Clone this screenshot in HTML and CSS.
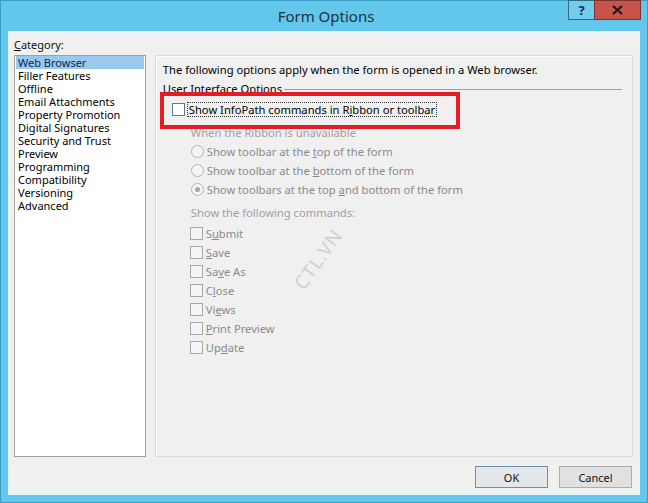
FILE: index.html
```html
<!DOCTYPE html>
<html lang="en">
<head>
  <meta charset="UTF-8" />
  <title>Form Options</title>
  <link rel="stylesheet" href="styles.css">
</head>
<body>
  <div class="window">
    <!-- title bar -->
    <div class="titlebar">
      <div></div>
      <div class="title">Form Options</div>
      <div class="caption-buttons">
        <div class="cap-help">?</div>
        <div class="cap-close">
          <svg width="11" height="10" viewBox="0 0 11 10"><path d="M1 1 L10 9 M10 1 L1 9" stroke="#1b1b1b" stroke-width="2.2"/></svg>
        </div>
      </div>
    </div>

    <!-- client area -->
    <div class="client">
      <div class="cat-label"><u>C</u>ategory:</div>
      <div class="main-row">
        <ul class="listbox">
          <li class="selected">Web Browser</li>
          <li>Filler Features</li>
          <li>Offline</li>
          <li>Email Attachments</li>
          <li>Property Promotion</li>
          <li>Digital Signatures</li>
          <li>Security and Trust</li>
          <li>Preview</li>
          <li>Programming</li>
          <li>Compatibility</li>
          <li>Versioning</li>
          <li>Advanced</li>
        </ul>

        <div class="panel">
          <div class="intro">The following options apply when the form is opened in a Web browser.</div>
          <div class="group-title"><span>User Interface Options</span><div class="group-line"></div></div>

          <div class="check-row main-check">
            <span class="box"></span><span class="focus">Show InfoPath commands in R<u>i</u>bbon or toolbar</span>
          </div>

          <div class="sub">
            <div class="sub-label">When the Ribbon is unavailable</div>
            <div class="radio-row"><span class="radio"></span><span>Show toolbar at the <u>t</u>op of the form</span></div>
            <div class="radio-row"><span class="radio"></span><span>Show toolbar at the <u>b</u>ottom of the form</span></div>
            <div class="radio-row"><span class="radio on"></span><span>Show toolbars at the top <u>a</u>nd bottom of the form</span></div>

            <div class="sub-label cmd-label">Show the following commands:</div>
            <div class="check-row"><span class="box"></span><span>S<u>u</u>bmit</span></div>
            <div class="check-row"><span class="box"></span><span><u>S</u>ave</span></div>
            <div class="check-row"><span class="box"></span><span>Sa<u>v</u>e As</span></div>
            <div class="check-row"><span class="box"></span><span>C<u>l</u>ose</span></div>
            <div class="check-row"><span class="box"></span><span>Vi<u>e</u>ws</span></div>
            <div class="check-row"><span class="box"></span><span><u>P</u>rint Preview</span></div>
            <div class="check-row"><span class="box"></span><span>Up<u>d</u>ate</span></div>
          </div>

          <!-- annotation + watermark -->
          <div class="highlight"></div>
          <div class="watermark">CTL.VN</div>
        </div>
      </div>

      <div class="button-row">
        <button class="btn default">OK</button>
        <button class="btn">Cancel</button>
      </div>
    </div>
  </div>
</body>
</html>
```

FILE: styles.css
```css
body {
  margin: 0;
  font-family: "Noto Sans", "Open Sans", sans-serif;
  font-size: 11px;
  color: #000;
}

.window {
  width: 648px;
  height: 503px;
  box-sizing: border-box;
  background-color: #62c7ea;
  border: 1px solid #3b9ec4;
  display: flex;
  flex-direction: column;
}

/* title bar */
.titlebar {
  height: 30px;
  display: grid;
  grid-template-columns: 1fr auto 1fr;
}

.title {
  font-size: 15px;
  color: #1d3340;
  line-height: 30px;
  padding-left: 4px;
}

.caption-buttons {
  justify-self: end;
  display: flex;
  align-items: flex-start;
  margin-right: 6px;
  margin-top: -1px;
}

.cap-help {
  width: 26px;
  height: 20px;
  box-sizing: border-box;
  border: 1px solid #2e6b82;
  border-right: none;
  background-color: #72cdec;
  color: #1b2a52;
  font-weight: bold;
  font-size: 13px;
  text-align: center;
  line-height: 18px;
}

.cap-close {
  width: 47px;
  height: 20px;
  box-sizing: border-box;
  border: 1px solid #7a3434;
  background-color: #c7534a;
  display: flex;
  align-items: center;
  justify-content: center;
}

/* client area */
.client {
  flex: 1;
  margin: 0 7px 7px 7px;
  background-color: #f0f0f0;
  border: 1px solid #dff3fb;
  padding: 6px 6px 0 5px;
  display: flex;
  flex-direction: column;
}

.cat-label {
  height: 17px;
  line-height: 14px;
  color: #111;
}

.main-row {
  display: flex;
  gap: 9px;
}

.listbox {
  list-style: none;
  margin: 0;
  padding: 0 1px;
  width: 132px;
  height: 402px;
  box-sizing: border-box;
  background-color: #fff;
  border: 1px solid #a0a0a0;
}

.listbox li {
  height: 13px;
  line-height: 13px;
  padding-left: 2px;
  white-space: nowrap;
}

.listbox li.selected {
  background-color: #99c9ef;
  color: #0b2a4f;
}

.panel {
  position: relative;
  width: 479px;
  height: 402px;
  box-sizing: border-box;
  border: 1px solid #dcdcdc;
  box-shadow: inset 1px 1px 0 #fff;
  padding: 7px 10px 0 7px;
  font-size: 11.2px;
}

.intro {
  height: 19px;
  line-height: 14px;
}

.group-title {
  display: flex;
  align-items: center;
  gap: 2px;
  height: 14px;
  line-height: 14px;
}

.group-line {
  flex: 1;
  height: 1px;
  background-color: #a0a0a0;
  margin-top: 1px;
}

.check-row, .radio-row {
  display: flex;
  align-items: center;
  height: 19px;
  white-space: nowrap;
}

.box {
  width: 11px;
  height: 11px;
  border: 1px solid #a8a8a8;
  background-color: #f4f4f4;
  margin-right: 3px;
  flex: none;
}

.main-check {
  margin: 4px 0 0 9px;
  height: 18px;
}

.main-check .box {
  border-color: #5a7a99;
  background-color: #fff;
}

.focus {
  outline: 1px dotted #333;
  outline-offset: 0;
  padding: 0 1px;
  line-height: 13px;
}

.sub {
  padding-left: 27px;
  padding-top: 6px;
  color: #8a8a8a;
}

.sub-label {
  height: 18px;
  line-height: 18px;
  color: #a0a0a0;
  padding-left: 1px;
}

.cmd-label {
  margin-top: 5px;
  height: 20px;
}

.radio-row {
  padding-left: 1px;
}

.radio {
  width: 11px;
  height: 11px;
  border: 1px solid #b4b4b4;
  border-radius: 50%;
  background-color: #f4f4f4;
  margin-right: 3px;
  display: flex;
  align-items: center;
  justify-content: center;
}

.radio.on::after {
  content: "";
  width: 5px;
  height: 5px;
  border-radius: 50%;
  background-color: #a6a6a6;
}

.highlight {
  position: absolute;
  left: 4px;
  top: 36px;
  width: 300px;
  height: 37px;
  box-sizing: border-box;
  border: 4px solid #e31c25;
}

.watermark {
  position: absolute;
  left: 128px;
  top: 190px;
  font-size: 19px;
  color: #d0d0d0;
  letter-spacing: 1px;
  transform: rotate(-55deg);
}

/* buttons */
.button-row {
  display: flex;
  justify-content: flex-end;
  gap: 11px;
  margin-top: 9px;
  padding-right: 1px;
}

.btn {
  width: 73px;
  height: 22px;
  font-family: inherit;
  font-size: 11px;
  color: #111;
  background-color: #e1e1e1;
  border: 1px solid #adadad;
  padding: 0;
}

.btn.default {
  border-color: #6d8fae;
  background-color: #e3e6ea;
}
```
